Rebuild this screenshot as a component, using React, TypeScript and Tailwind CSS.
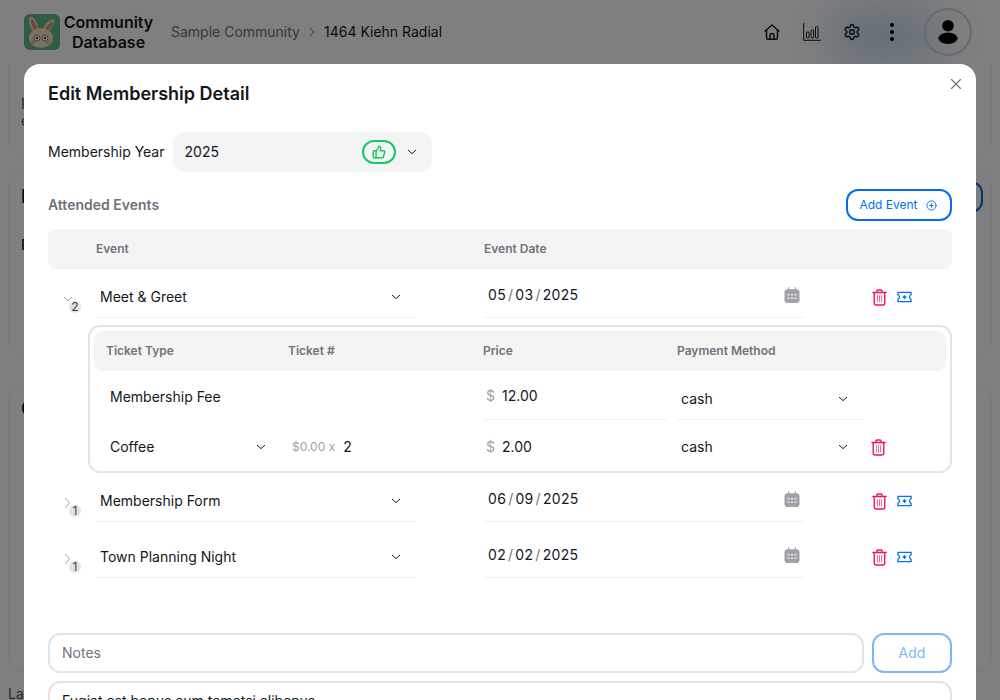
import React from 'react';
import { Settings, ThumbsUp, CirclePlus, X } from 'lucide-react';

const Chevron = ({ className = '' }: { className?: string }) => (
  <svg viewBox="0 0 10 6" className={`w-[10px] h-[6px] ${className}`} fill="none" stroke="currentColor" strokeWidth="1">
    <path d="M1 1l4 3.6L9 1" />
  </svg>
);

const Trash = () => (
  <svg viewBox="0 0 16 18" className="w-[15px] h-[17px] text-[#f31260]" fill="none" stroke="currentColor">
    <path d="M5.2 3V2.2c0-.7.5-1.2 1.2-1.2h3.2c.7 0 1.2.5 1.2 1.2V3" strokeWidth="1.4" />
    <path d="M1 3.6h14" strokeWidth="1.6" strokeLinecap="round" />
    <path d="M2.4 4v10.8c0 1.2.9 2.2 2.1 2.2h7c1.2 0 2.1-1 2.1-2.2V4" strokeWidth="1.5" />
    <path d="M5.8 6.6v7.6M8 6.6v7.6M10.2 6.6v7.6" strokeWidth="1" opacity="0.7" />
  </svg>
);

const Ticket = () => (
  <svg viewBox="0 0 16 12" className="w-[15px] h-[12px] text-[#006fee]" fill="none" stroke="currentColor">
    <path d="M1 1h14v2.6c-1.2.4-1.6 1.3-1.6 2.4s.4 2 1.6 2.4V11H1V8.4C2.2 8 2.6 7.1 2.6 6S2.2 4 1 3.6V1z" strokeWidth="1.4" strokeLinejoin="round" />
    <path d="M6 6h4M8 4v4" strokeWidth="1.5" />
  </svg>
);

const Calendar = () => (
  <svg viewBox="0 0 16 16" className="w-4 h-4 text-[#a1a1aa]" fill="currentColor">
    <path d="M4.2 0h1v2.2h5.6V0h1v2.2h1.2C14.2 2.2 15.5 3.4 15.5 5v8.2c0 1.6-1.3 2.8-2.5 2.8H3C1.8 16 .5 14.8.5 13.2V5c0-1.6 1.3-2.8 2.5-2.8h1.2V0z" />
    <g fill="#fff" opacity="0.75">
      <rect x="3.6" y="7" width="2" height="1.6" />
      <rect x="7" y="7" width="2" height="1.6" />
      <rect x="10.4" y="7" width="2" height="1.6" />
      <rect x="3.6" y="10.4" width="2" height="1.6" />
      <rect x="7" y="10.4" width="2" height="1.6" />
      <rect x="10.4" y="10.4" width="2" height="1.6" />
    </g>
  </svg>
);

const Logo = () => (
  <svg viewBox="0 0 36 36" className="w-9 h-9 shrink-0">
    <rect width="36" height="36" rx="6" fill="#5cb88a" />
    <path d="M11 20C6 14 3 6 6 3c3-2 8 6 9 13z" fill="#f0d9bf" />
    <path d="M11 17C8 12 6 7 7 5c2-1 5 5 6.400 10z" fill="#d98f80" />
    <path d="M19 15c2-6 8-11 11-9 2 2-3 9-8 13z" fill="#f0d9bf" />
    <path d="M21 15c2-4 6-7 8-7 1 1-3 6-6 9z" fill="#d98f80" />
    <ellipse cx="17" cy="24" rx="12" ry="10" fill="#f3e2c8" />
    <circle cx="13" cy="24" r="3" fill="#f8eee0" stroke="#7a6a5a" strokeWidth="0.7" />
    <circle cx="21" cy="24" r="3" fill="#f8eee0" stroke="#7a6a5a" strokeWidth="0.7" />
    <circle cx="13" cy="24" r="1" fill="#333" />
    <circle cx="21" cy="24" r="1" fill="#333" />
    <circle cx="9" cy="28" r="2" fill="#eeb3a6" />
    <circle cx="24" cy="28" r="2" fill="#eeb3a6" />
  </svg>
);

const HomeIcon = () => (
  <svg viewBox="0 0 18 18" className="w-[18px] h-[18px]" fill="none" stroke="currentColor" strokeWidth="1.500" strokeLinejoin="round">
    <path d="M1.500 8.500L9 2l7.500 6.500M3.500 7v7.500c0 1 .6 1.800 1.600 1.800h7.800c1 0 1.600-.8 1.600-1.800V7" />
    <path d="M7 16v-3.500c0-1.200.9-2 2-2s2 .8 2 2V16" />
  </svg>
);

const ChartIcon = () => (
  <svg viewBox="0 0 18 18" className="w-[18px] h-[18px]" fill="none" stroke="currentColor" strokeWidth="1">
    <path d="M.7 0v17.300h17" />
    <rect x="3.500" y="9" width="2.600" height="6" rx="1" />
    <rect x="8" y="7" width="2.600" height="8" rx="1" />
    <rect x="12.500" y="3.500" width="2.600" height="11.500" rx="1" />
  </svg>
);

const UserIcon = () => (
  <svg viewBox="0 0 24 30" className="w-[20px] h-[26px]" fill="currentColor">
    <circle cx="12" cy="7.500" r="7" />
    <ellipse cx="12" cy="22.500" rx="11.500" ry="7" />
  </svg>
);

const Underlined = ({ className = '', children }: { className?: string; children: React.ReactNode }) => (
  <div className={`flex items-center border-b border-[#f0f0f1] ${className}`}>{children}</div>
);

const EventRow = ({ name, date, count, open }: { name: string; date: string[]; count: number; open?: boolean }) => (
  <div className="flex h-14 items-start pt-2">
    <div className="relative w-12 h-10 shrink-0">
      {open ? (
        <Chevron className="absolute left-[15px] top-[19px] text-[#a1a1aa]" />
      ) : (
        <svg viewBox="0 0 7 12" className="absolute left-[16px] top-[16px] w-[7px] h-[12px] text-[#a1a1aa]" fill="none" stroke="currentColor">
          <path d="M1 1l4.600 5L1 11" />
        </svg>
      )}
      <span className="absolute left-[21px] top-[24px] w-3 h-3 rounded-full bg-[#e4e4e7] flex items-center justify-center text-xs text-[#3f3f46]">
        {count}
      </span>
    </div>
    <Underlined className="w-[320px] h-[41px] pl-1 pr-[15px] justify-between">
      <span className="text-sm text-[#11181c]">{name}</span>
      <Chevron />
    </Underlined>
    <Underlined className="w-[320px] h-[41px] ml-[68px] pl-1 pr-[4px] justify-between pb-1">
      <span className="text-sm text-[#11181c] tracking-[0.3px] flex gap-[2px]">
        <span>{date[0]}</span><span className="text-[#71717a]">/</span><span>{date[1]}</span><span className="text-[#71717a]">/</span><span>{date[2]}</span>
      </span>
      <Calendar />
    </Underlined>
    <div className="flex items-center h-10 gap-[10px] ml-[68px]">
      <Trash />
      <Ticket />
    </div>
  </div>
);

const PriceField = ({ value, underline }: { value: string; underline?: boolean }) => (
  <div className={`w-[184px] flex items-center pl-[3px] text-sm ${underline ? 'h-[49px] pt-[2px] border-b border-[#f0f0f1]' : ''}`}>
    <span className="text-[#a1a1aa] w-4">$</span>
    <span className="text-[#11181c]">{value}</span>
  </div>
);

export default function App() {
  return (
    <div className="relative w-[1000px] h-[700px] overflow-hidden bg-white font-['Inter',sans-serif] text-[#11181c]">
      {/* page behind the dialog */}
      <header className="relative h-16 flex items-center pl-6 pr-7">
        <div className="absolute left-[830px] top-[16px] w-[110px] h-[40px] rounded-full bg-[#7ab0e0] blur-xl opacity-60" />
        <Logo />
        <div className="w-[99px] text-center text-base font-semibold leading-5 ml-[-1px]">Community Database</div>
        <nav className="flex items-center text-sm ml-[13px]">
          <span className="text-[#71717a]">Sample Community</span>
          <svg viewBox="0 0 6 10" className="w-[6px] h-[10px] mx-[9px] text-[#71717a]" fill="none" stroke="currentColor"><path d="M1 1l3.600 4L1 9" /></svg>
          <span>1464 Kiehn Radial</span>
        </nav>
        <div className="relative ml-auto flex items-center">
          <span className="w-10 flex justify-center"><HomeIcon /></span>
          <span className="w-10 flex justify-center"><ChartIcon /></span>
          <span className="w-10 flex justify-center"><Settings size={18} /></span>
          <span className="w-10 flex justify-center">
            <span className="flex flex-col gap-[3px]">
              <i className="w-1 h-1 rounded-full bg-black" />
              <i className="w-1 h-1 rounded-full bg-black" />
              <i className="w-1 h-1 rounded-full bg-black" />
            </span>
          </span>
          <span className="w-12 h-12 ml-3 rounded-full border-2 border-[#d4d4d8] flex items-center justify-center text-black"><UserIcon /></span>
        </div>
      </header>
      <main className="flex flex-col px-2">
        <section className="h-[91px] rounded-b-2xl border border-t-0 border-[#f4f4f5] pl-3 pt-[31px] text-sm leading-[17px] text-[#52525b]">P<br />e</section>
        <section className="relative h-[183px] mt-[17px] rounded-2xl border border-[#f4f4f5] pl-3 pt-[10px] text-[#11181c]">
          <p className="text-lg font-semibold">N</p>
          <p className="mt-6 text-sm font-medium">F</p>
          <span className="absolute right-2 top-2 w-24 h-8 rounded-xl border-2 border-[#006fee]" />
        </section>
        <section className="h-[287px] mt-[30px] rounded-2xl border border-[#f4f4f5] pl-3 pt-[9px] text-lg font-semibold">C</section>
        <p className="mt-[12px] text-sm text-[#52525b]">Last</p>
      </main>

      {/* dialog backdrop */}
      <div className="absolute inset-0 bg-black/50" />

      <div className="absolute left-6 top-16 w-[952px] h-[700px] bg-white rounded-t-2xl px-6">
        <button className="absolute right-[11px] top-[11px] text-[#71717a]"><X size={18} strokeWidth={1.5} /></button>
        <h2 className="pt-4 text-lg font-semibold leading-7">Edit Membership Detail</h2>

        <div className="flex items-center mt-[24px]">
          <span className="text-sm">Membership Year</span>
          <div className="ml-2 w-[259px] h-10 rounded-xl bg-[#f4f4f5] flex items-center pl-3 pr-[15px] text-sm">
            <span>2025</span>
            <span className="ml-auto w-[34px] h-[24px] rounded-full border-2 border-[#17c964] flex items-center justify-center text-[#17c964]">
              <ThumbsUp size={14} strokeWidth={2.5} />
            </span>
            <Chevron className="ml-[11px]" />
          </div>
        </div>

        <div className="flex items-center justify-between mt-[17px]">
          <span className="text-sm font-semibold text-[#71717a]">Attended Events</span>
          <button className="w-[106px] h-8 rounded-xl border-2 border-[#006fee] text-[#006fee] text-xs flex items-center justify-center gap-[8px] pr-[2px]">
            Add Event <CirclePlus size={11} />
          </button>
        </div>

        <div className="flex items-center h-10 mt-2 rounded-lg bg-[#f4f4f5] text-xs font-semibold text-[#71717a]">
          <span className="pl-12 w-[436px]">Event</span>
          <span>Event Date</span>
        </div>

        <EventRow name="Meet &amp; Greet" date={['05', '03', '2025']} count={2} open />

        <div className="ml-10 h-[148px] rounded-xl border-2 border-[#e4e4e7] p-1">
          <div className="flex items-center h-10 rounded-lg bg-[#f4f4f5] text-xs font-semibold text-[#71717a]">
            <span className="pl-3 w-[194px]">Ticket Type</span>
            <span className="w-[195px]">Ticket #</span>
            <span className="w-[194px]">Price</span>
            <span>Payment Method</span>
          </div>
          <div className="flex items-center h-[49px]">
            <span className="w-[389px] pl-4 pt-[3px] text-sm">Membership Fee</span>
            <PriceField value="12.00" underline />
            <div className="ml-[10px] w-[186px] h-[49px] flex items-center justify-between pl-1 pr-[15px] pt-[7px] text-sm border-b border-[#f0f0f1]">
              <span>cash</span>
              <Chevron />
            </div>
          </div>
          <div className="flex items-center h-[47px] pt-[7px]">
            <div className="w-[194px] pl-4 pr-[22px] flex items-center justify-between text-sm">
              <span>Coffee</span>
              <Chevron />
            </div>
            <div className="w-[195px] pl-1 flex items-center">
              <span className="text-xs text-[#a1a1aa]">$0.00 x</span>
              <span className="text-sm ml-2">2</span>
            </div>
            <PriceField value="2.00" />
            <div className="ml-[10px] w-[186px] flex items-center justify-between pl-1 pr-[15px] text-sm">
              <span>cash</span>
              <Chevron />
            </div>
            <span className="ml-[8px]"><Trash /></span>
          </div>
        </div>

        <div>
          <EventRow name="Membership Form" date={['06', '09', '2025']} count={1} />
          <EventRow name="Town Planning Night" date={['02', '02', '2025']} count={1} />
        </div>

        <div className="flex gap-2 mt-[48px]">
          <div className="w-[816px] h-10 rounded-xl border-2 border-[#e4e4e7] flex items-center pl-3 text-sm text-[#71717a]">Notes</div>
          <button className="w-20 h-10 rounded-xl border-2 border-[#7fb7f6] text-[#7fb7f6] text-sm">Add</button>
        </div>
        <div className="mt-2 h-20 rounded-xl border-2 border-[#e4e4e7] pl-3 pt-[8px] text-sm">Fugiat est bonus cum tametsi alibenus</div>
      </div>
    </div>
  );
}
